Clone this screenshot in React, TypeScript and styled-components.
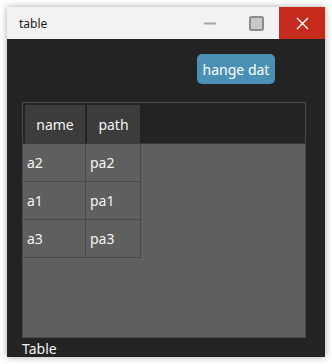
import React from "react";
import styled, { createGlobalStyle } from "styled-components";

const Global = createGlobalStyle`
  html, body { margin: 0; padding: 0; background: #ffffff; }
  body { font-family: "Noto Sans", "Open Sans", sans-serif; overflow: hidden; }
  #root { padding: 7px; }
`;

const Window = styled.div`
  width: 318px;
  height: 350px;
  display: flex;
  flex-direction: column;
  box-shadow: 0 0 7px rgba(0, 0, 0, 0.35);
  background: #232323;
  overflow: hidden;
`;

const TitleBar = styled.div`
  height: 32px;
  flex: none;
  display: flex;
  align-items: stretch;
  background: #f2f2f2;
`;

const Title = styled.div`
  flex: 1;
  display: flex;
  align-items: center;
  padding-left: 12px;
  font-size: 12px;
  color: #1a1a1a;
  font-family: "Noto Sans", sans-serif;
`;

const WinButton = styled.div<{ $close?: boolean; $w: number }>`
  width: ${(p) => p.$w}px;
  display: flex;
  align-items: center;
  justify-content: center;
  background: ${(p) => (p.$close ? "#c42b1c" : "transparent")};
`;

const Content = styled.div`
  flex: 1;
  display: flex;
  flex-direction: column;
  padding: 15px 19px 0 15px;
`;

const TopRow = styled.div`
  display: flex;
  justify-content: flex-end;
  padding-right: 31px;
`;

const ActionButton = styled.button`
  height: 30px;
  width: 78px;
  border: none;
  border-radius: 5px;
  background: #4a90b4;
  color: #ffffff;
  font-family: "Noto Sans", sans-serif;
  font-size: 14px;
  padding: 0 4px;
  white-space: nowrap;
  overflow: hidden;
  display: flex;
  align-items: center;
  justify-content: center;
`;

const TableFrame = styled.div`
  margin-top: 18px;
  height: 236px;
  border: 1px solid #4b4b4b;
  background: #5f5f5f;
  display: flex;
  flex-direction: column;
  box-sizing: border-box;
`;

const HeaderBar = styled.div`
  display: flex;
  gap: 2px;
  padding: 2px 0 0 2px;
  height: 41px;
  box-sizing: border-box;
  background: #232323;
  border-bottom: 1px solid #3a3a3a;
`;

const HeaderCell = styled.div<{ $w: number }>`
  width: ${(p) => p.$w}px;
  background: #3c3c3c;
  color: #f4f4f4;
  font-size: 14px;
  display: flex;
  align-items: center;
  justify-content: center;
`;

const Row = styled.div`
  display: flex;
  height: 38px;
`;

const Cell = styled.div<{ $w: number }>`
  width: ${(p) => p.$w}px;
  box-sizing: border-box;
  border-right: 1px solid #4a4a4a;
  border-bottom: 1px solid #4a4a4a;
  color: #f4f4f4;
  font-size: 14px;
  padding-left: 4px;
  display: flex;
  align-items: center;
`;

const Label = styled.div`
  padding-top: 3px;
  color: #f4f4f4;
  font-size: 14px;
  line-height: 16px;
`;

const rows = [
  ["a2", "pa2"],
  ["a1", "pa1"],
  ["a3", "pa3"],
];

export default function App() {
  return (
    <>
      <Global />
      <Window>
        <TitleBar>
          <Title>table</Title>
          <WinButton $w={46}>
            <svg width="12" height="3" viewBox="0 0 12 3">
              <rect x="0" y="0.5" width="12" height="2" fill="#a6a6a6" />
            </svg>
          </WinButton>
          <WinButton $w={46}>
            <svg width="15" height="15" viewBox="0 0 15 15">
              <rect x="1" y="1" width="13" height="13" rx="1.5" fill="#c9c9c9" stroke="#8e8e8e" strokeWidth="2" />
            </svg>
          </WinButton>
          <WinButton $w={46} $close>
            <svg width="13" height="13" viewBox="0 0 13 13">
              <path d="M1 1 L12 12 M12 1 L1 12" stroke="#ffffff" strokeWidth="1.4" />
            </svg>
          </WinButton>
        </TitleBar>
        <Content>
          <TopRow>
            <ActionButton>hange dat</ActionButton>
          </TopRow>
          <TableFrame>
            <HeaderBar>
              <HeaderCell $w={60}>name</HeaderCell>
              <HeaderCell $w={53}>path</HeaderCell>
            </HeaderBar>
            {rows.map((r) => (
              <Row key={r[0]}>
                <Cell $w={63}>{r[0]}</Cell>
                <Cell $w={55}>{r[1]}</Cell>
              </Row>
            ))}
          </TableFrame>
          <Label>Table</Label>
        </Content>
      </Window>
    </>
  );
}
